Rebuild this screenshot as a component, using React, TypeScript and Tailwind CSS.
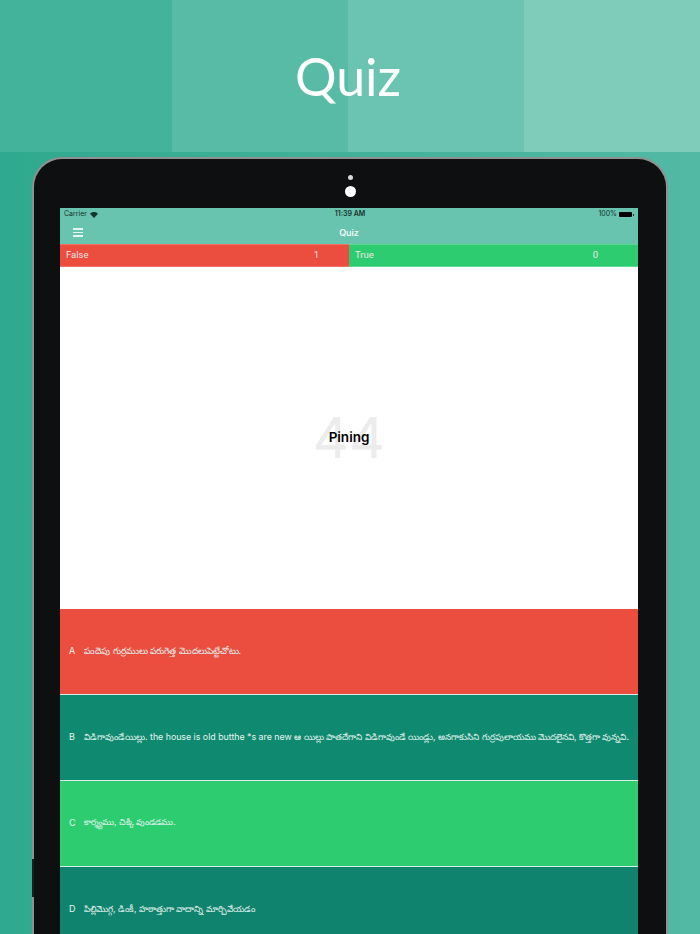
const answers = [
  { letter: 'A', text: 'పందెపు గుర్రములు పరుగెత్త మొదలుపెట్టేచోటు.', bg: 'bg-[#eb4d3f]', size: 'text-[9px]' },
  {
    letter: 'B',
    text: 'విడిగావుండేయిల్లు. the house is old butthe *s are new ఆ యిల్లు పాతదేగాని విడిగావుండే యిండ్లు, అనగాకుసిని గుర్రపులాయము మొదలైనవి, కొత్తగా వున్నవి.',
    bg: 'bg-[#0f8a70]',
    size: 'text-[8.8px]',
  },
  { letter: 'C', text: 'కార్శ్యము, చిక్కి వుండడము.', bg: 'bg-[#2ecc71]', size: 'text-[8.6px]' },
  { letter: 'D', text: 'పిల్లిమొగ్గ, డింకీ, హఠాత్తుగా వాదాన్ని మార్చివేయడం', bg: 'bg-[#0f836e]', size: 'text-[8.8px]' },
];

const App = () => {
  return (
    <div className="relative h-[934px] w-[700px] overflow-hidden bg-gradient-to-r from-[#2fa98f] to-[#52b9a5] font-['Inter','Noto_Sans',sans-serif]">
      {/* Title bands */}
      <div className="relative flex h-[152px]">
        <div className="w-[172px] bg-[#44b39b]" />
        <div className="w-[176px] bg-[#58bba6]" />
        <div className="w-[176px] bg-[#6ac4b1]" />
        <div className="w-[176px] bg-[#80ccbb]" />
        <h1 className="absolute inset-x-0 top-[43px] pr-[4px] text-center font-['Lato',sans-serif] text-[52px] leading-[66px] text-white">
          Quiz
        </h1>
      </div>

      {/* Tablet */}
      <div className="relative mx-[32px] mt-[5px] flex h-[800px] flex-col rounded-t-[30px] border-x-2 border-t-2 border-[#8d918f] bg-[#0e0f11] pl-[26px] pr-[28px]">
        {/* Side button */}
        <div className="absolute left-[-2px] top-[700px] h-[38px] w-[2px] bg-[#1c1d1e]" />

        <div className="flex h-[49px] flex-col items-center pl-[3px]">
          <div className="mt-[16px] h-[5px] w-[5px] rounded-full bg-[#d8d8d8]" />
          <div className="mt-[6px] h-[11px] w-[11px] rounded-full bg-white" />
        </div>

        <div className="flex flex-col bg-white">
          {/* Status bar */}
          <div className="relative flex h-[13px] items-center justify-between bg-[#68c3af] pl-[4px] pr-[4px] text-[7px] text-[#17332d]">
            <div className="flex items-center gap-[3px]">
              <span>Carrier</span>
              <svg viewBox="0 0 16 12" className="h-[6px] w-[8px] fill-[#17332d]">
                <path d="M8 12 L0 3.6 C4.4 -0.9 11.6 -0.9 16 3.6 Z" />
              </svg>
            </div>
            <span className="absolute inset-x-0 pl-[2px] text-center font-semibold">11:39 AM</span>
            <div className="flex items-center gap-[2px]">
              <span>100%</span>
              <div className="h-[5px] w-[13px] rounded-[1px] bg-black" />
              <div className="ml-[-1px] h-[2px] w-px bg-[#17332d]" />
            </div>
          </div>

          {/* Nav bar */}
          <div className="relative flex h-[23px] items-center bg-[#68c3af] pl-[13px]">
            <div className="flex w-[10px] flex-col gap-[2px]">
              <div className="h-[1.5px] bg-[#e6f5f1]" />
              <div className="h-[1.5px] bg-[#e6f5f1]" />
              <div className="h-[1.5px] bg-[#e6f5f1]" />
            </div>
            <span className="absolute inset-x-0 text-center text-[9px] font-medium text-white">Quiz</span>
          </div>

          {/* Score */}
          <div className="flex h-[23px] font-['Roboto',sans-serif] text-[9.5px] text-[#f0e6e2]">
            <div className="flex w-[289px] items-center justify-between border-y border-[#ef7468] bg-[#eb4d3f] pl-[6px] pr-[30px]">
              <span>False</span>
              <span>1</span>
            </div>
            <div className="flex flex-1 items-center justify-between border-y border-[#5ad98e] bg-[#2ecc71] pl-[6px] pr-[40px]">
              <span>True</span>
              <span>0</span>
            </div>
          </div>

          {/* Question */}
          <div className="relative flex h-[342px] items-center justify-center">
            <span className="absolute text-[56px] font-normal text-[#ececec]">44</span>
            <span className="relative mb-[1px] text-[13.5px] font-semibold text-black">Pining</span>
          </div>

          {/* Answers */}
          {answers.map((answer) => (
            <div
              key={answer.letter}
              className={`flex h-[86px] shrink-0 items-center gap-[9px] border-b border-[#d9eee8] pb-[2px] pl-[9px] text-[#e6f3ef] ${answer.bg} ${answer.size}`}
            >
              <span className="w-[6px] text-[9px]">{answer.letter}</span>
              <span className="whitespace-nowrap">{answer.text}</span>
            </div>
          ))}
        </div>
      </div>
    </div>
  );
};

export default App;
